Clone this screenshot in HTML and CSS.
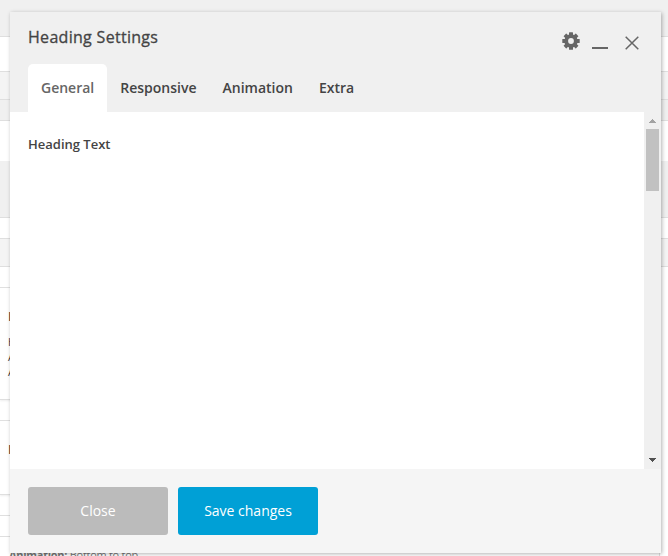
FILE: index.html
```html
<!DOCTYPE html>
<html lang="en">
<head>
<meta charset="utf-8">
<title>Heading Settings</title>
<link rel="stylesheet" href="styles.css">
</head>
<body>
<div class="page">
  <div class="row top"></div>
  <div class="row r1"></div>
  <div class="row r2 tint"></div>
  <div class="row r3"></div>
  <div class="row r4"></div>
  <div class="row r5"></div>
  <div class="row r6"></div>
  <div class="row r7 tint"></div>
  <div class="list">
    <div class="row r8"></div>
    <div class="row card c1"><b>Heading</b><span>Heading</span><span>Animation</span><span>Animation</span></div>
    <div class="row r9"></div>
    <div class="row card c2"><b>Heading</b></div>
    <div class="row r9"></div>
    <div class="row r9"></div>
    <p class="note"><b>Animation:</b> Bottom to top</p>
  </div>
</div>
<section class="dialog">
  <header class="head">
    <div class="bar">
      <h1>Heading Settings</h1>
      <div class="tools">
        <svg class="gear" width="18" height="18" viewBox="0 0 18 18"><g fill="#666"><rect x="7" y="0.3" width="4" height="17.4" rx=".5"/><rect x="7" y="0.3" width="4" height="17.4" rx=".5" transform="rotate(45 9 9)"/><rect x="7" y="0.3" width="4" height="17.4" rx=".5" transform="rotate(90 9 9)"/><rect x="7" y="0.3" width="4" height="17.4" rx=".5" transform="rotate(135 9 9)"/><circle cx="9" cy="9" r="6.7"/></g><circle cx="9" cy="9" r="2.9" fill="#f0f0f0"/></svg>
        <span class="minimize"></span>
        <svg class="close" width="14" height="14" viewBox="0 0 14 14"><path d="M.7.7 13.3 13.3M13.3.7.7 13.3" stroke="#666" stroke-width="1.5"/></svg>
      </div>
    </div>
    <nav class="tabs"><a class="active">General</a><a>Responsive</a><a>Animation</a><a>Extra</a></nav>
  </header>
  <main class="body">
    <div class="content"><label>Heading Text</label></div>
    <div class="scroll">
      <svg width="7" height="4" viewBox="0 0 7 4" shape-rendering="crispEdges"><path d="M3 0h1v1h1v1h1v1h1v1H0V3h1V2h1V1h1z" fill="#a3a3a3"/></svg>
      <div class="thumb"></div>
      <svg width="7" height="4" viewBox="0 0 7 4" shape-rendering="crispEdges"><path d="M0 0h7v1H6v1H5v1H4v1H3V3H2V2H1V1H0z" fill="#505050"/></svg>
    </div>
  </main>
  <footer class="foot"><button>Close</button><button class="save">Save changes</button></footer>
</section>
</body>
</html>
```
FILE: styles.css
```css
* { box-sizing: border-box; }
body { margin: 0; height: 556px; overflow: hidden; position: relative; background: #fff; font-family: "Open Sans", sans-serif; color: #444; }
.page { height: 556px; overflow: hidden; }
.row { border-bottom: 1px solid #dfdfdf; background: #fff; }
.row.tint { background: #f4f4f4; }
.row.top { height: 37px; background: #f0f0f0; }
.r1 { height: 35px; }
.r2 { height: 28px; }
.row.r3 { height: 21px; background: #f0f0f0; }
.r4 { height: 40px; border: 0; }
.row.r5 { height: 57px; background: #f0f0f0; }
.r6 { height: 21px; }
.r7 { height: 28px; }
.list { width: 660px; border-right: 1px solid #dfdfdf; }
.r8, .r9 { height: 21px; }
.card { padding-left: 8px; font-size: 11px; line-height: 15px; box-shadow: 0 1px 2px #eee; position: relative; }
.card b, .card span { display: block; }
.card b { font-size: 13px; line-height: 20px; font-weight: 600; }
.c1 { height: 112px; padding-top: 18px; }
.c1 b { margin-bottom: 8px; }
.c2 { height: 74px; padding-top: 18px; }
.note { margin: 10px 0 0 9px; font-size: 11px; letter-spacing: -.28px; line-height: 15px; color: #777; }
.note b { font-weight: 700; }
.dialog { position: absolute; left: 10px; top: 12px; width: 651px; height: 541px; display: flex; flex-direction: column; background: #fff; box-shadow: 1px 1px 4px rgba(0,0,0,.3); }
.head { height: 100px; background: #f0f0f0; display: flex; flex-direction: column; justify-content: space-between; padding: 0 18px; }
.bar { display: flex; justify-content: space-between; }
h1 { margin: 13px 0 0; font-size: 16px; line-height: 24px; font-weight: 400; letter-spacing: .3px; -webkit-text-stroke: .3px #444; }
.tools { display: flex; align-items: flex-start; padding: 20px 4px 0 0; }
.gear { margin-top: -.5px; }
.minimize { width: 16px; height: 2px; background: #666; margin: 15px 17px 0 12px; }
.close { margin-top: 3.5px; }
.tabs { display: flex; height: 48px; }
.tabs a { padding: 0 13px; font-size: 14px; line-height: 48px; font-weight: 600; }
.tabs .active { background: #fff; border-radius: 5px 5px 0 0; color: #666; }
.body { flex: 1; display: flex; }
.content { flex: 1; padding: 22px 18px; }
label { display: block; font-size: 13px; line-height: 20px; font-weight: 600; }
.scroll { width: 17px; background: #f0f0f0; display: flex; flex-direction: column; align-items: center; padding: 7px 0; }
.thumb { width: 13px; height: 62px; background: #c1c1c1; margin: 6px 0 auto; }
.foot { height: 84px; padding: 18px; background: #f5f5f5; display: flex; gap: 10px; }
button { width: 140px; height: 48px; border: 0; border-radius: 3px; background: #bbb; color: #fff; font: 14px "Open Sans", sans-serif; padding: 0 0 2px; }
.save { background: #00a0d6; }
```
